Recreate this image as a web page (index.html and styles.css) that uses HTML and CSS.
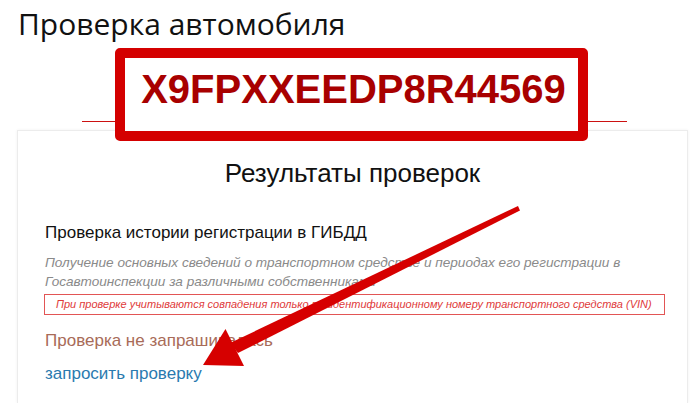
FILE: index.html
```html
<!DOCTYPE html>
<html lang="ru">
<head>
<meta charset="utf-8">
<title>Проверка автомобиля</title>
<link rel="stylesheet" href="styles.css">
</head>
<body>
<h1 class="page-title">Проверка автомобиля</h1>
<div class="vin-section">
  <div class="vin-box">X9FPXXEEDP8R44569</div>
</div>
<div class="card">
  <h2 class="card-title">Результаты проверок</h2>
  <div class="check">
    <h3 class="check-title">Проверка истории регистрации в ГИБДД</h3>
    <p class="check-desc">Получение основных сведений о транспортном средстве и периодах его регистрации в Госавтоинспекции за различными собственниками</p>
    <div class="check-note">При проверке учитываются совпадения только по идентификационному номеру транспортного средства (VIN)</div>
    <div class="check-status">Проверка не запрашивалась</div>
    <a class="check-link" href="#">запросить проверку</a>
  </div>
</div>
<svg class="arrow" width="695" height="403" viewBox="0 0 695 403" xmlns="http://www.w3.org/2000/svg">
  <polygon points="520,210.5 518,206 230,343 238,353" fill="#d60000"/>
  <polygon points="203,365 225.5,329 244,366" fill="#d60000"/>
</svg>
</body>
</html>
```

FILE: styles.css
```css
html, body {
  margin: 0;
  padding: 0;
  background: #fff;
}
body {
  width: 695px;
  height: 403px;
  overflow: hidden;
  position: relative;
  font-family: "Liberation Sans", Arial, sans-serif;
  color: #111;
}
.page-title {
  margin: 0;
  padding: 4px 0 0 18px;
  font-family: "Open Sans", sans-serif;
  font-weight: 400;
  font-size: 30px;
  line-height: 40px;
  color: #111;
}
.vin-section {
  margin-top: 4px;
  height: 93px;
  margin-bottom: -11px;
  background: linear-gradient(#cc1111, #cc1111) no-repeat;
  background-size: 545px 1px;
  background-position: 82px 73px;
}
.vin-box {
  position: relative;
  z-index: 1;
  box-sizing: border-box;
  margin-left: 115px;
  width: 473px;
  height: 93px;
  border: 10px solid #d40000;
  border-radius: 5px;
  background: #fff;
  font-family: "Liberation Sans", Arial, sans-serif;
  font-weight: 700;
  font-size: 40px;
  line-height: 63px;
  padding-left: 4px;
  text-align: center;
  color: #a80000;
}
.card {
  box-sizing: border-box;
  margin-left: 17px;
  width: 671px;
  height: 273px;
  border: 1px solid #ececec;
  border-bottom: none;
  box-shadow: 0 0 3px rgba(0, 0, 0, 0.06);
  background: #fff;
  padding: 0 0 0 27px;
}
.card-title {
  margin: 27px 0 0 -27px;
  font-weight: 400;
  font-size: 26px;
  line-height: 30px;
  text-align: center;
  color: #111;
}
.check-title {
  margin: 35px 0 0;
  font-weight: 400;
  font-size: 17px;
  line-height: 20px;
  color: #111;
}
.check-desc {
  margin: 10px 0 0;
  width: 610px;
  font-style: italic;
  font-size: 13.6px;
  line-height: 19px;
  color: #8a8a8a;
}
.check-note {
  box-sizing: border-box;
  margin: 3px 0 0 -1px;
  width: 621px;
  height: 21px;
  border: 1px solid #e25555;
  padding: 0 0 0 11px;
  font-style: italic;
  font-size: 11px;
  line-height: 19px;
  color: #e03a3a;
}
.check-status {
  margin: 16px 0 0;
  font-size: 17px;
  line-height: 20px;
  color: #a86b58;
}
.check-link {
  display: inline-block;
  margin: 13px 0 0;
  font-size: 17px;
  line-height: 20px;
  color: #2a7aaf;
  text-decoration: none;
}
.arrow {
  position: absolute;
  left: 0;
  top: 0;
  pointer-events: none;
}
```
